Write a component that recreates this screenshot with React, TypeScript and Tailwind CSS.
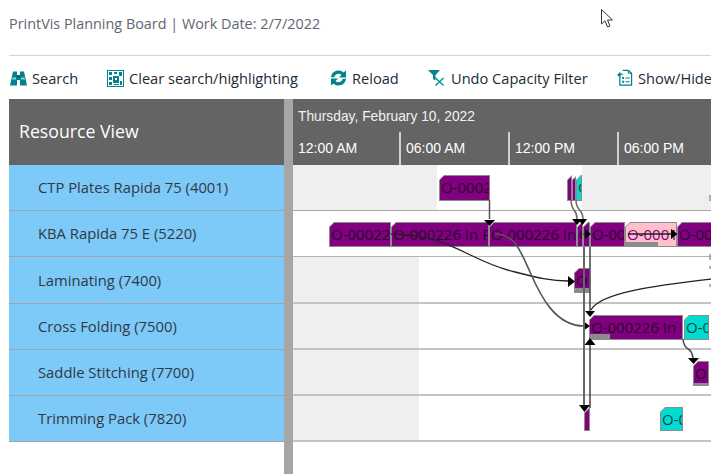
import React from "react"

const resources = [
  { name: "CTP Plates Rapida 75 (4001)", cls: "h-[46px]" },
  { name: "KBA Rapida 75 E (5220)", cls: "h-[46px]" },
  { name: "Laminating (7400)", cls: "h-[47px]" },
  { name: "Cross Folding (7500)", cls: "h-[46px]" },
  { name: "Saddle Stitching (7700)", cls: "h-[46px]" },
  { name: "Trimming Pack (7820)", cls: "h-[46px]" },
]

function Binoculars() {
  return (
    <svg width="17" height="17" viewBox="0 0 17 17" className="shrink-0">
      <path d="M3 1.500h4V5h3V1.500h4L15 6l2 9.500h-7V10H7v5.500H0L2 6z" fill="#00838a" />
      <path d="M2.500 7.500h3.500v2H2zM11 7.500h3.500l.4 2H11z" fill="#8fd0d3" />
      <path d="M7 5.500h3v2H7z" fill="#005f64" />
    </svg>
  )
}

function ClearGrid() {
  return (
    <svg width="17" height="17" viewBox="0 0 17 17" className="shrink-0">
      <rect x="0.500" y="0.500" width="16" height="16" fill="#fff" stroke="#00838a" />
      <path d="M2 2h3v3H2zM7 2h3v2H7zM12 2h3v4h-3zM2 7h3v3H2zM2 12h3v3H2z" fill="#00838a" />
      <path d="M6 6h6v7H6z" fill="#00838a" />
      <path d="M8 8h2v2H8zM13 8h2v2h-2z" fill="#fff" />
      <path d="M13 11h2v4h-2zM7 14h5v1H7z" fill="#00838a" />
    </svg>
  )
}

function ReloadIcon() {
  return (
    <svg width="17" height="16" viewBox="0 0 16 16" className="shrink-0">
      <path d="M0.500 7.200C1 3 4.200 .5 8 .5c2 0 3.800.8 5 2.100L15.500 .5v7H8.500l2.500-2.500C10.300 4.200 9.200 3.700 8 3.700c-2 0-3.700 1.400-4.200 3.500z" fill="#00838a" />
      <path d="M15.500 8.800C15 13 11.800 15.500 8 15.500c-2 0-3.800-.8-5-2.100L.5 15.500v-7h7L5 11c.7.8 1.800 1.300 3 1.300 2 0 3.700-1.400 4.200-3.500z" fill="#00838a" />
    </svg>
  )
}

function FilterX() {
  return (
    <svg width="18" height="18" viewBox="0 0 18 18" className="shrink-0">
      <path d="M0 1h12L7.500 6v5.500L5 10V6z" fill="#00838a" />
      <path d="M7.500 9l8 7.500M15.500 9l-8 7.500" stroke="#00a0a6" strokeWidth="1.700" fill="none" />
    </svg>
  )
}

function ShowHide() {
  return (
    <svg width="16" height="18" viewBox="0 0 17 18" className="shrink-0">
      <path d="M3 6V16.500H15.500V4L12 .8H6" fill="#fff" stroke="#00838a" strokeWidth="1.300" />
      <path d="M12 .8V4H15.500" fill="none" stroke="#00838a" />
      <path d="M5.500 8h2v2h-2zM5.500 12h2v2h-2zM9 8.500h4.500v1H9zM9 12.500h4.500v1H9z" fill="#00838a" />
      <path d="M0 6l3.500-4v2.200C5 4.200 6.500 4.500 7 6 5.800 5.500 4.800 5.600 3.500 6v2z" fill="#00838a" />
    </svg>
  )
}

const tools = [
  { label: "Search", icon: <Binoculars />, cls: "w-[97px]" },
  { label: "Clear search/highlighting", icon: <ClearGrid />, cls: "w-[223px]" },
  { label: "Reload", icon: <ReloadIcon />, cls: "w-[98px]" },
  { label: "Undo Capacity Filter", icon: <FilterX />, cls: "w-[189px]" },
  { label: "Show/Hide", icon: <ShowHide />, cls: "w-[100px]" },
]

function Bar(props: { cls: string; color: string; label?: string; progress?: string }) {
  return (
    <div className={"absolute bg-[#8c8c8c] p-px [clip-path:polygon(5px_0,100%_0,100%_100%,0_100%,0_5px)] " + props.cls}>
      <div className={"relative h-full overflow-hidden whitespace-nowrap pl-px text-[15px] leading-[23px] [clip-path:polygon(4px_0,100%_0,100%_100%,0_100%,0_4px)] " + props.color}>
        {props.label}
        {props.progress && <div className={"absolute bottom-0 left-0 bg-[#8c8c8c] " + props.progress} />}
      </div>
    </div>
  )
}

const purple = "bg-[#800080] text-[#2b062b]"
const cyan = "bg-[#00dcd0] text-[#04484a]"
const pink = "bg-[#ffc0cb] text-[#800080]"

function Links() {
  return (
    <svg viewBox="293 165 418 309" className="absolute left-0 top-0 h-[309px] w-[418px]" fill="none">
      {/* row 1 to row 2 */}
      <path d="M489.500 200V219" stroke="#555" strokeWidth="1.500" />
      <path d="M571 200C571 212 577 208 577 219M576 200C576 212 583 208 583 219" stroke="#666" strokeWidth="1.500" />
      <path d="M484 220h11l-5.500 6zM572 219h10l-5 6zM578 219h9l-4.500 6z" fill="#000" />
      {/* long curves */}
      <path d="M391 234C450 234 470 262 515 272C535 277 550 281 568 281" stroke="#222" strokeWidth="1.300" />
      <path d="M495 234C515 234 520 250 530 272C540 295 555 326 584 326" stroke="#555" strokeWidth="1.600" />
      <path d="M568 276v11l7-5.500zM583 321v10l7-5z" fill="#000" />
      {/* verticals */}
      <path d="M584 247V406" stroke="#666" strokeWidth="2" />
      <path d="M590 247V312M590 344V408" stroke="#444" strokeWidth="1.500" />
      <path d="M579 405h11l-5.500 7zM584.500 345h11l-5.500-7zM585 311h10l-5 6z" fill="#000" />
      <path d="M711 279C660 285 600 292 591 310" stroke="#222" strokeWidth="1.300" />
      {/* row 2 short links */}
      <path d="M583 234h3" stroke="#222" />
      <path d="M585 229v10l6-5z" fill="#000" />
      <path d="M628 234H672" stroke="#222" strokeWidth="1.300" />
      <path d="M671 229v10l6.500-5z" fill="#000" />
      {/* row 4 to row 5 */}
      <path d="M683 339C684 352 692 346 693 358" stroke="#444" strokeWidth="1.500" />
      <path d="M688 358h11l-5.500 6z" fill="#000" />
      {/* bits of bars further right */}
      <path d="M710 195v6M710 254v6M710 266v3M710 284v3" stroke="#999" strokeWidth="1.500" />
    </svg>
  )
}

export default function App() {
  return (
    <div className="relative h-[474px] w-[711px] overflow-hidden bg-white font-['Open_Sans',sans-serif]">
      {/* Title */}
      <div className="ml-[9px] flex h-[56px] items-start border-b border-[#d4d4d4] pt-[14px] text-[14.400px] leading-[20px] text-[#5f6670]">
        PrintVis Planning Board | Work Date: 2/7/2022
      </div>

      {/* Toolbar */}
      <div className="ml-[10px] flex h-[43px] items-center whitespace-nowrap pt-[2px] text-[14.600px] text-[#212b36]">
        {tools.map((t) => (
          <div key={t.label} className={"flex shrink-0 items-center gap-[5px] " + t.cls}>
            {t.icon}
            <span>{t.label}</span>
          </div>
        ))}
      </div>

      <div className="flex h-[375px]">
        {/* Resource column */}
        <div className="ml-[9px] w-[275px] shrink-0">
          <div className="flex h-[66px] items-center bg-[#646464] pl-[10px] pb-px text-[17.700px] text-white">
            Resource View
          </div>
          {resources.map((r) => (
            <div key={r.name} className={"flex items-center border-b border-[#a3a3a3] bg-[#7dc9f8] pl-[29px] text-[14.800px] text-[#2f3a44] " + r.cls}>
              {r.name}
            </div>
          ))}
        </div>

        {/* Splitter */}
        <div className="w-[9px] shrink-0 bg-[#a6a6a6]" />

        {/* Planning board */}
        <div className="min-w-0 flex-1 overflow-hidden">
          <div className="h-[66px] bg-[#646464] font-['Liberation_Sans',sans-serif] text-white">
            <div className="h-[33px] pl-[5px] pt-[9px] text-[13.800px] leading-[17px] text-[#f2f2f2]">Thursday, February 10, 2022</div>
            <div className="flex h-[33px] text-[14px]">
              <div className="flex w-[108px] shrink-0 items-center border-r-2 border-[#d0d0d0] pl-[5px]">12:00 AM</div>
              <div className="flex w-[109px] shrink-0 items-center border-r-2 border-[#d0d0d0] pl-[5px]">06:00 AM</div>
              <div className="flex w-[109px] shrink-0 items-center border-r-2 border-[#d0d0d0] pl-[5px]">12:00 PM</div>
              <div className="flex flex-1 items-center pl-[5px]">06:00 PM</div>
            </div>
          </div>

          <div className="relative h-[309px] overflow-hidden">
            <div className="flex h-[46px] border-b border-[#a8a8a8]">
              <div className="w-[144px] bg-[#efefef]" />
              <div className="w-[145px]" />
              <div className="flex-1 bg-[#efefef]" />
            </div>
            <div className="h-[46px] border-b border-[#b4b4b4]" />
            <div className="flex h-[47px] border-b-2 border-[#c4c4c4]">
              <div className="w-[126px] bg-[#efefef]" />
            </div>
            {[0, 1, 2].map((i) => (
              <div key={i} className="flex h-[46px] border-b-2 border-[#c4c4c4]">
                <div className="w-[126px] bg-[#efefef]" />
              </div>
            ))}

            <Bar cls="left-[146px] top-[10px] h-[26px] w-[51px]" color={purple} label="O-0002" />
            <Bar cls="left-[274px] top-[10px] h-[26px] w-[5px]" color={purple} />
            <Bar cls="left-[279px] top-[10px] h-[26px] w-[4px]" color={purple} />
            <Bar cls="left-[283px] top-[10px] h-[26px] w-[6px]" color={cyan} label="O" />

            <Bar cls="left-[36px] top-[57px] h-[25px] w-[62px]" color={purple} label="O-000226" />
            <Bar cls="left-[98px] top-[57px] h-[25px] w-[98px]" color={purple} label="O-000226 In Process" />
            <Bar cls="left-[196px] top-[57px] h-[25px] w-[88px]" color={purple} label="O-000226 In Process" />
            <Bar cls="left-[284px] top-[57px] h-[25px] w-[6px]" color={purple} label="O" />
            <Bar cls="left-[290px] top-[57px] h-[25px] w-[7px]" color={purple} />
            <Bar cls="left-[297px] top-[57px] h-[25px] w-[35px]" color={purple} label="O-000" />
            <Bar cls="left-[332px] top-[57px] h-[25px] w-[52px]" color={pink} label="O-0001" progress="h-[4px] w-[32px]" />
            <Bar cls="left-[384px] top-[57px] h-[25px] w-[40px]" color={purple} label="O-000" />

            <Bar cls="left-[281px] top-[103px] h-[25px] w-[16px]" color={purple} label="O" progress="h-[4px] w-full" />

            <Bar cls="left-[296px] top-[150px] h-[25px] w-[94px]" color={purple} label="O-000226 In Process" progress="h-[5px] w-[20px]" />
            <Bar cls="left-[391px] top-[150px] h-[25px] w-[25px]" color={cyan} label="O-000" />

            <Bar cls="left-[400px] top-[196px] h-[25px] w-[16px]" color={purple} label="O" progress="h-[2px] w-full" />

            <Bar cls="left-[291px] top-[243px] h-[23px] w-[6px]" color={purple} />
            <Bar cls="left-[367px] top-[242px] h-[24px] w-[23px]" color={cyan} label="O-000" />

            <Links />
          </div>
        </div>
      </div>

      {/* Mouse pointer */}
      <svg width="14" height="20" viewBox="0 0 14 20" className="absolute left-[601px] top-[9px]">
        <path d="M.5.500V15L4 11.800 6.500 18 9 17 6.500 11H11.500z" fill="#fff" stroke="#333" strokeWidth="1" />
      </svg>
    </div>
  )
}
